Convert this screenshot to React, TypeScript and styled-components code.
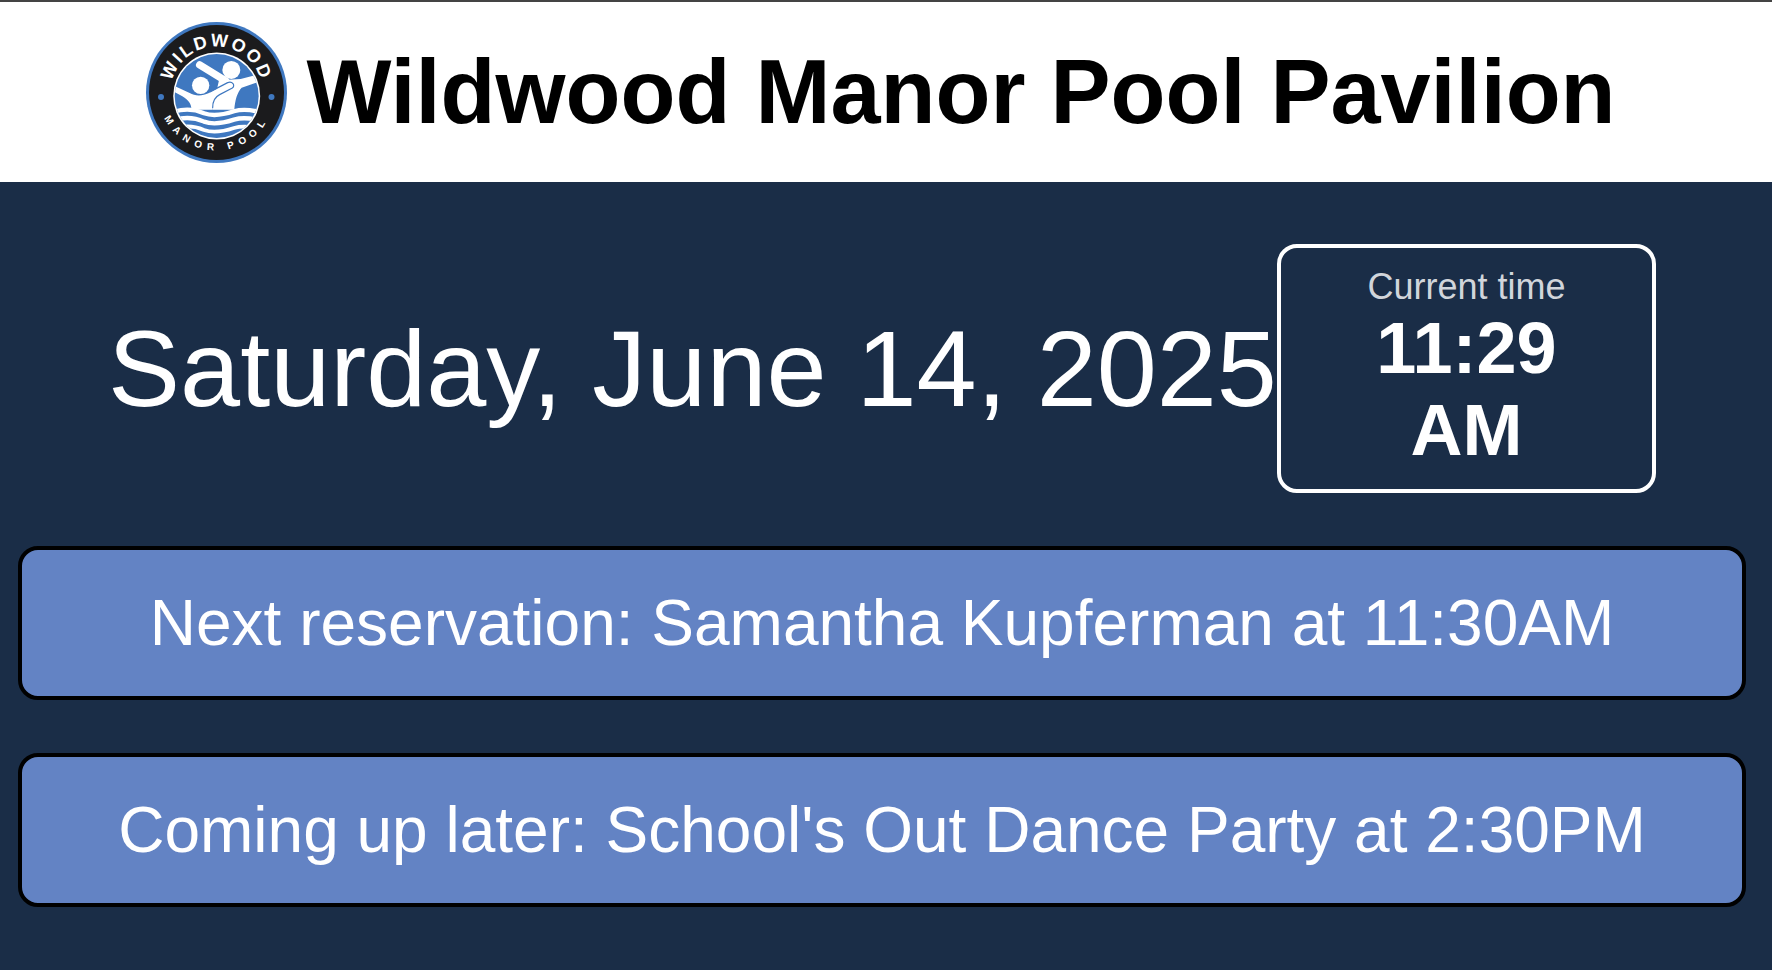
import React from 'react';
import styled, {createGlobalStyle} from 'styled-components';

const GlobalStyle = createGlobalStyle`
  html, body {
    margin: 0;
    padding: 0;
    background: #1a2d47;
    font-family: "Liberation Sans", Arial, sans-serif;
  }
`;

const WAVE = 'M 10 0 C 45 -12 80 -8 105 3 C 135 14 165 7 195 -3 C 215 -9 245 -8 275 0';

const Logo = () => (
  <LogoSvg viewBox="0 0 141 141" aria-label="Wildwood Manor Pool">
    <defs>
      <path id="arcTop" d="M 24.5 70.5 A 46 46 0 0 1 116.5 70.5" />
      <path id="arcBottom" d="M 12.5 70.5 A 58 58 0 0 0 128.5 70.5" />
      <clipPath id="innerClip">
        <circle cx="143" cy="137" r="126" />
      </clipPath>
    </defs>
    <circle cx="70.5" cy="70.5" r="70.5" fill="#3f78c0" />
    <circle cx="70.5" cy="70.5" r="67.5" fill="#1b1b1d" />
    <circle cx="70.7" cy="74" r="43.5" fill="#ffffff" />
    <circle cx="15" cy="75" r="3" fill="#3f78c0" />
    <circle cx="125.5" cy="75" r="3" fill="#3f78c0" />
    <LogoTop>
      <textPath href="#arcTop" startOffset="50%" textAnchor="middle">
        WILDWOOD
      </textPath>
    </LogoTop>
    <LogoBottom>
      <textPath href="#arcBottom" startOffset="50%" textAnchor="middle">
        MANOR POOL
      </textPath>
    </LogoBottom>
    <g transform="translate(23 28.3) scale(0.3333)">
      <circle cx="143" cy="137" r="126" fill="#3f78c0" />
      <g clipPath="url(#innerClip)">
        <circle cx="95" cy="105" r="26" fill="#ffffff" />
        <circle cx="187" cy="59" r="27" fill="#ffffff" />
        <path d="M 92 44 L 170 92" stroke="#ffffff" strokeWidth="22" strokeLinecap="round" fill="none" />
        <path d="M 150 90 L 215 86 L 268 72 L 272 94 L 218 112 C 205 125 198 150 196 178 L 130 178 Z" fill="#ffffff" />
        <path d="M 10 104 L 62 128 C 78 138 100 138 120 128 L 176 98 C 190 92 200 108 188 116 L 148 136 L 130 178 L 68 178 C 66 160 60 150 40 138 L 10 122 Z" fill="#ffffff" />
        <path d="M 124 124 L 176 97 C 190 91 200 106 190 113 L 152 133 C 138 140 131 150 131 172" stroke="#3f78c0" strokeWidth="3.5" fill="none" strokeLinecap="round" />
        <path d={WAVE} transform="translate(0 186)" stroke="#ffffff" strokeWidth="13" fill="none" />
        <path d={WAVE} transform="translate(0 211)" stroke="#ffffff" strokeWidth="13" fill="none" />
        <path d={WAVE} transform="translate(0 236)" stroke="#ffffff" strokeWidth="11" fill="none" />
      </g>
    </g>
  </LogoSvg>
);

const App = () => (
  <>
    <GlobalStyle />
    <Page>
      <Header>
        <Logo />
        <Title>Wildwood Manor Pool Pavilion</Title>
      </Header>
      <DateRow>
        <DateText>Saturday, June 14, 2025</DateText>
        <TimeBox>
          <TimeLabel>Current time</TimeLabel>
          <TimeValue>11:29 AM</TimeValue>
        </TimeBox>
      </DateRow>
      <Banners>
        <Banner>Next reservation: Samantha Kupferman at 11:30AM</Banner>
        <Banner>Coming up later: School's Out Dance Party at 2:30PM</Banner>
      </Banners>
    </Page>
  </>
);

export default App;

const Page = styled.div`
  width: 1772px;
  height: 970px;
  overflow: hidden;
  display: flex;
  flex-direction: column;
  background: #1a2d47;
`;

const Header = styled.header`
  box-sizing: content-box;
  height: 180px;
  padding-right: 10px;
  border-top: 2px solid #444444;
  background: #ffffff;
  display: flex;
  align-items: center;
  justify-content: center;
  gap: 19px;
`;

const LogoSvg = styled.svg`
  width: 141px;
  height: 141px;
  flex: none;
`;

const LogoTop = styled.text`
  fill: #ffffff;
  font-size: 18px;
  font-weight: 700;
  letter-spacing: 2.2px;
  font-family: "Liberation Sans", Arial, sans-serif;
`;

const LogoBottom = styled.text`
  fill: #ffffff;
  font-size: 10px;
  font-weight: 700;
  letter-spacing: 6px;
  font-family: "Liberation Sans", Arial, sans-serif;
`;

const Title = styled.h1`
  margin: 0;
  font-size: 90px;
  line-height: 103px;
  font-weight: 700;
  color: #000000;
  white-space: nowrap;
`;

const DateRow = styled.section`
  display: flex;
  align-items: center;
  justify-content: center;
  padding: 62px 8px 0 0;
`;

const DateText = styled.div`
  font-size: 108px;
  line-height: 124px;
  color: #ffffff;
  white-space: nowrap;
`;

const TimeBox = styled.div`
  box-sizing: border-box;
  width: 379px;
  height: 249px;
  border: 4px solid #ffffff;
  border-radius: 20px;
  padding: 19px 24px;
  display: flex;
  flex-direction: column;
  align-items: center;
  text-align: center;
`;

const TimeLabel = styled.div`
  font-size: 36px;
  line-height: 40px;
  color: #d1d5db;
`;

const TimeValue = styled.div`
  font-size: 72px;
  line-height: 82px;
  font-weight: 700;
  color: #ffffff;
  width: 240px;
`;

const Banners = styled.section`
  display: flex;
  flex-direction: column;
  gap: 53px;
  padding: 53px 26px 0 18px;
`;

const Banner = styled.div`
  box-sizing: border-box;
  height: 154px;
  border: 4px solid #000000;
  border-radius: 20px;
  background: #6383c4;
  color: #ffffff;
  font-size: 64px;
  display: flex;
  align-items: center;
  justify-content: center;
  white-space: nowrap;
`;
